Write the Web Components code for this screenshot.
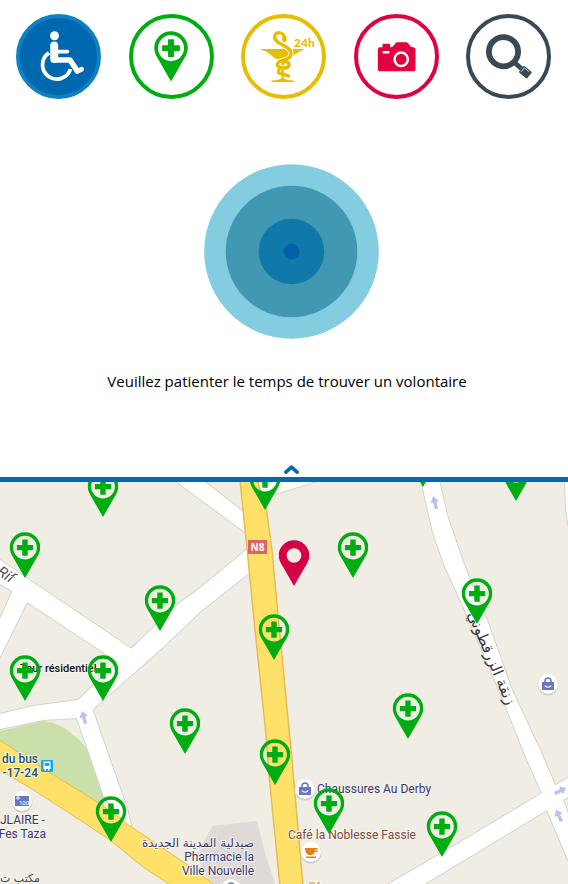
<!DOCTYPE html>
<html lang="fr">
<head>
<meta charset="utf-8">
<meta name="viewport" content="width=device-width, initial-scale=1">
<title>Recherche d'un volontaire</title>
<style>
  body { margin: 0; background: #fff; font-family: "Open Sans", sans-serif; color: #000; }
</style>
</head>
<body>
<assist-app></assist-app>

<script>
const define = (name, html, setup) => {
  const template = document.createElement('template');
  template.innerHTML = html;
  customElements.define(name, class extends HTMLElement {
    constructor() {
      super();
      this.attachShadow({ mode: 'open' }).append(template.content.cloneNode(true));
    }
    connectedCallback() { if (setup) setup(this, this.shadowRoot); }
  });
};

/* Pharmacy pin: ring, cross and pointed tail */
define('pin-glyph', `
  <style>
    :host { display: block; width: 31px; color: #00ad11; }
    svg { display: block; width: 100%; }
    .dot { display: none; }
    :host([kind="here"]) .dot { display: block; }
    :host([kind="here"]) .cross { display: none; }
  </style>
  <svg viewBox="0 0 31 46" aria-hidden="true" fill="currentColor">
    <g class="cross">
      <path fill-rule="evenodd" d="M15.500 .2A15.300 15.300 0 0 0 .2 15.500C.2 19.500 2 22.500 4 26L15.500 46 27 26C29 22.500 30.800 19.500 30.800 15.500A15.300 15.300 0 0 0 15.500 .2ZM15.500 3.700A11.900 11.900 0 1 1 15.500 27.500A11.900 11.900 0 1 1 15.500 3.700Z"/>
      <path d="M12.800 7.500h5.400v5.400h5.400v5.400h-5.400v5.400h-5.400v-5.400H7.400v-5.400h5.400z"/>
    </g>
    <path class="dot" fill-rule="evenodd" d="M15.500 .2A15.300 15.300 0 0 0 .2 15.500C.2 20 2.500 23.500 4 26L15.500 46 27 26C28.500 23.500 30.800 20 30.800 15.500A15.300 15.300 0 0 0 15.500 .2ZM15.500 8.200A7.300 7.300 0 1 1 15.500 22.800A7.300 7.300 0 1 1 15.500 8.200Z"/>
  </svg>`);

define('round-action', `
  <style>
    :host { display: block; }
    button { display: grid; place-items: center; width: 85px; height: 85px; padding: 0; border: 4px solid; border-radius: 50%; background: #fff; color: inherit; cursor: pointer; }
    :host([active]) button { background: #0068ae; border-color: #0f80c1; }
  </style>
  <button type="button"><slot></slot></button>`,
  (host, root) => root.querySelector('button').setAttribute('aria-label', host.getAttribute('label')));

define('action-bar', `
  <style>
    :host { display: flex; justify-content: space-between; padding: 14px 17px 0 16px; }
    svg { display: block; width: 85px; height: 85px; margin: -4px; }
    pin-glyph { width: 34px; }
    text { font: 900 12px Lato, sans-serif; }
  </style>
  <round-action active label="Assistance mobilité" style="color:#fff">
    <svg viewBox="0 0 85 85" fill="none" stroke="currentColor" stroke-linejoin="round" stroke-linecap="round">
      <circle cx="38.500" cy="21.700" r="4.500" fill="currentColor" stroke="none"/>
      <path d="M38.200 31.500V45" stroke-width="8"/>
      <path d="M41 37.600H51.500" stroke-width="3.600"/>
      <path d="M38.500 46H54L61 56.500" stroke-width="5.500"/>
      <path d="M61 57.500L65.500 55.300" stroke-width="4.800"/>
      <path d="M33 38.800A14.300 14.300 0 1 0 54.500 55" stroke-width="3.800" stroke-linecap="butt"/>
    </svg>
  </round-action>
  <round-action label="Pharmacies" style="color:#00ad11"><pin-glyph></pin-glyph></round-action>
  <round-action label="Pharmacies de garde" style="color:#e6bd00">
    <svg viewBox="0 0 85 85" fill="currentColor">
      <path d="M19.500 35H64C60 36.800 58 37.800 55 39.800C51 42.800 49.500 45.300 45.500 45.800H37.500C33 44.800 31 41.300 27 38.800C24 37 22 36.300 19.500 35.800Z"/>
      <path d="M39.500 45H43.500L42.600 64C44 66 49 66.200 53 66.700V68H30.500V66.700C34 66.200 39 66 40.500 64Z"/>
      <path d="M43.400 24C44 18 33.500 16.500 33.500 23C33.500 30.500 50 31 50 39.500C50 48 36.500 44.500 36.500 50.500C36.500 54 47.500 55 47.500 50.500" fill="none" stroke="#fff" stroke-width="5"/>
      <path d="M43.400 24C44 18 33.500 16.500 33.500 23C33.500 30.500 50 31 50 39.500C50 48 36.500 44.500 36.500 50.500C36.500 54.500 47.500 55.500 48 51C48 47.500 44.500 47 42.500 48M38 56C35 61 44 59.500 47.500 62" fill="none" stroke="currentColor" stroke-width="3.400" stroke-linecap="round"/>
      <ellipse cx="43.400" cy="25" rx="2.300" ry="3.300"/>
      <text x="53" y="33">24h</text>
    </svg>
  </round-action>
  <round-action label="Photo" style="color:#e3003f">
    <svg viewBox="0 0 85 85" fill="currentColor">
      <g transform="translate(0 .5)">
        <path d="M25.800 32.800H28.500V30.500Q28.500 29.300 29.700 29.300H35Q36.200 29.300 36.200 30.500V32.800Q38.500 32.800 39.500 31.300L41.500 28.700Q42.200 27.800 43.500 27.800H52Q53.200 27.800 54 28.700L56 31.300Q57 32.800 59 32.800Q61.500 32.800 61.500 35V54.500Q61.500 56.700 59.500 56.700H25.800Q23.800 56.700 23.800 54.500V35Q23.800 32.800 25.800 32.800Z"/>
        <rect x="28.500" y="36.500" width="7" height="2.600" rx="1.200" fill="#fff"/>
        <circle cx="47.200" cy="44.800" r="6.700" stroke="#fff" stroke-width="2.500"/>
      </g>
    </svg>
  </round-action>
  <round-action label="Rechercher" style="color:#384a55">
    <svg viewBox="0 0 85 85" fill="none" stroke="currentColor">
      <circle cx="37.500" cy="37.700" r="14.600" stroke-width="5.800"/>
      <path d="M48.500 48.500L55.500 54.700" stroke-width="4.800"/>
      <g transform="translate(55 54.500) rotate(40)" fill="currentColor" stroke="none">
        <rect x=".5" y="-4.200" width="10.500" height="8.400" rx="1"/>
        <path d="M2.200-2.700V2.500M2.200-2.700H8" fill="none" stroke="#fff" stroke-width=".7"/>
      </g>
    </svg>
  </round-action>`);

define('pulse-rings', `
  <style>
    :host { display: block; width: 175px; }
    svg { display: block; width: 100%; }
  </style>
  <svg viewBox="0 0 175 175" role="img" aria-label="Recherche en cours">
    <circle cx="87.500" cy="87.500" r="87.300" fill="#84cde0"/>
    <circle cx="87.500" cy="87.500" r="65.800" fill="#4098b3"/>
    <circle cx="87.500" cy="87.500" r="32.800" fill="#0f7aaa"/>
    <circle cx="87.500" cy="87.500" r="7.800" fill="#0560a9"/>
  </svg>`);

define('waiting-panel', `
  <style>
    :host { display: flex; flex-direction: column; align-items: center; padding-top: 65px; border-bottom: 5px solid #0068ae; }
    pulse-rings { margin-left: 15px; }
    p { margin: 30px 0 0; padding-left: 6px; font: 15px/24px "Open Sans", sans-serif; text-align: center; }
    button { display: block; margin: 68px 0 0 15px; padding: 4px 8px 3px; border: 0; background: none; color: #0068ae; cursor: pointer; }
    svg { display: block; width: 15px; height: 9px; }
  </style>
  <pulse-rings></pulse-rings>
  <p role="status"><slot></slot></p>
  <button type="button" aria-label="Agrandir la carte">
    <svg viewBox="0 0 15 9"><path d="M1.900 7.100L7.500 2.200L13.100 7.100" fill="none" stroke="currentColor" stroke-width="3.600" stroke-linecap="round" stroke-linejoin="round"/></svg>
  </button>`);

define('map-pin', `
  <style>
    :host { position: absolute; width: 31px; transform: translate(-50%, -100%); }
    button { display: block; padding: 0; border: 0; background: none; color: inherit; cursor: pointer; }
    :host([kind="here"]) pin-glyph { color: #d40047; }
  </style>
  <button type="button"><pin-glyph></pin-glyph></button>`,
  (host, root) => {
    const kind = host.getAttribute('kind');
    root.querySelector('button').setAttribute('aria-label', kind ? 'Ma position' : 'Pharmacie');
    if (kind) root.querySelector('pin-glyph').setAttribute('kind', kind);
  });

/* City map: roads, places and labels share one coordinate system */
define('city-map', `
  <style>
    :host { display: block; position: relative; width: 100%; aspect-ratio: 568 / 402; overflow: hidden; background: #f0ede5; }
    svg { display: block; width: 100%; height: 100%; }
    .label { font: 12px Roboto, "DejaVu Sans", sans-serif; fill: #36386a; stroke: #f7f4ef; stroke-width: 2px; paint-order: stroke; }
    .end { text-anchor: end; }
    .stop { font-weight: 500; fill: #28506a; }
    .cafe { fill: #824a3c; }
    .black { font-size: 11px; font-weight: 500; fill: #111; }
    .arabic { font-size: 12px; font-family: "DejaVu Sans", sans-serif; }
    .street { font-size: 15px; fill: #333; stroke: none; }
  </style>
  <svg viewBox="0 482 568 402">
    <defs>
      <g id="roads">
        <path d="M0 560L25 577 132 649 118 662 27 602 14 592 0 584Z"/>
        <path d="M14 588L0 619V657L28 600Z"/>
        <path d="M130 650L177 605 200 588 250 547 254 569 200 612 160 650 92 710 77 718 43 720 0 729V714L33 706 78 700 118 662Z"/>
        <path d="M76 716L88 750 104 797 132 830 127 808 110 760 92 708Z"/>
        <path d="M177 482L200 499 250 536 246 514 205 482Z"/>
        <path d="M254 480H320L275 494 260 500Z"/>
        <path d="M421 480L433 533 445 567 465 610 502 697 527 760 542 793 547 810 568 860V813L563 800 555 785 540 750 512 690 487 620 470 580 460 553 447 515 439 480Z"/>
        <path d="M568 778L542 793 447 850 387 885H423L547 810 568 797Z"/>
        <path d="M565 480L566 510 570 535V480Z"/>
      </g>
      <g id="bag" fill="#6876c8">
        <path d="M-6-2H6V6H-6Z"/>
        <path d="M-3-1V-3A3 3 0 0 1 3-3V-1" fill="none" stroke="#6876c8" stroke-width="1.600"/>
        <path d="M-3 1.500A3.200 2.600 0 0 0 3 1.500" fill="none" stroke="#fff" stroke-width="1.200"/>
      </g>
      <g id="disc"><circle cy="1" r="10.500" fill="#cfcbc4"/><circle r="10" fill="#fff"/></g>
      <path id="way" d="M0-7L4.500-1H1.700V6H-1.700V-1H-4.500Z" fill="#b9c1ee"/>
    </defs>

    <path d="M212 826L257 821 264 850 275 884H210L197 856Z" fill="#dfdad5"/>
    <path d="M0 731L43 721Q60 722 73 735Q86 744 91 757L104 797V808L28 762 0 742Z" fill="#cbdfab"/>
    <use href="#roads" stroke="#d8d3c8" stroke-width="2" stroke-linejoin="round"/>
    <use href="#roads" fill="#fff"/>
    <path d="M-2 739L28 759 102 805 130 826 185 863 216 886H172L143 867 110 840 83 822 32 789-2 769Z" fill="#ffe169" stroke="#e6bb52"/>
    <path d="M240 480L247 548 254 620 266 735 269 775 280 886H303L292 760 278 615 272 550 266 507 257 480Z" fill="#ffe169" stroke="#e6bb52" stroke-width="1.500"/>

    <use href="#way" transform="translate(435 503) rotate(-14)"/>
    <use href="#way" transform="translate(84 718) rotate(-16)"/>
    <use href="#way" transform="translate(560 791) rotate(64)"/>
    <use href="#way" transform="translate(559 816) rotate(-24)"/>
    <use href="#way" transform="translate(399 888) rotate(60)"/>

    <rect x="248" y="540" width="19" height="14" fill="#dc6464"/>
    <text x="257.500" y="551" text-anchor="middle" font-family="Noto Sans, sans-serif" font-size="10" font-weight="700" fill="#fff">N8</text>

    <text class="label" transform="translate(-4 574) rotate(33)" style="font-size:15px;font-style:italic;fill:#555;stroke:none">Rif</text>
    <text class="label arabic street" text-anchor="middle" transform="translate(487 660) rotate(67)">زنقة الزرقطوني</text>

    <text class="label black" x="20" y="672">Tour résidentiel</text>
    <text class="label stop end" x="38" y="763">du bus</text>
    <text class="label stop end" x="38" y="777">-17-24</text>
    <text class="label" x="0" y="824">JLAIRE -</text>
    <text class="label end" x="46" y="838">Fes Taza</text>
    <text class="label arabic" x="0" y="882" style="font-size:11px;fill:#444">مكتب ت</text>
    <text class="label arabic" x="142" y="847">صيدلية المدينة الجديدة</text>
    <text class="label end" x="254" y="861">Pharmacie la</text>
    <text class="label end" x="254" y="875">Ville Nouvelle</text>
    <text class="label" x="317" y="793">Chaussures Au Derby</text>
    <text class="label cafe" x="288" y="839">Café la Noblesse Fassie</text>

    <g transform="translate(47 766)">
      <rect x="-6" y="-6" width="12" height="12" rx="1" fill="#12a9f3"/>
      <path d="M-3.500-4.500H3.500V3H2.500V4.500H1V3H-1V4.500H-2.500V3H-3.500Z" fill="#fff"/>
      <path d="M-2.300-3H2.300V0H-2.300Z" fill="#12a9f3"/>
    </g>
    <g transform="translate(305 789)"><use href="#disc"/><use href="#bag"/></g>
    <g transform="translate(548 684)"><use href="#disc"/><use href="#bag"/></g>
    <g transform="translate(231 889)"><use href="#disc"/><use href="#bag"/></g>
    <g transform="translate(22 801)">
      <use href="#disc"/>
      <rect x="-7" y="-5" width="14" height="10" fill="#6876c8"/>
      <path d="M-6-3H-2M-4-5V-1" stroke="#fff"/>
      <text x="2" y="4" text-anchor="middle" font-family="Roboto, sans-serif" font-size="6" fill="#fff">100</text>
    </g>
    <g transform="translate(311 852)">
      <use href="#disc"/>
      <path d="M-6-4H6.500V0H3.500Q2.500 3 0 3H-2Q-6 2-6-4ZM-5 4.500H5V6H-5Z" fill="#e97c14"/>
      <path d="M4-3H5.500V-1H4Z" fill="#fff"/>
    </g>
    <g transform="translate(315 890)">
      <use href="#disc"/>
      <path d="M-5-8V-4M-3-8V-4M-1-8V-4M2-4Q2-8 4-8V-4" stroke="#e97c14" fill="none"/>
    </g>
  </svg>`,
  (host, root) => {
    const pins = [[423, 487], [516, 501], [265, 510], [103, 517], [25, 578], [353, 578],
      [160, 631], [477, 624], [274, 660], [25, 701], [103, 701], [408, 739],
      [185, 754], [275, 785], [329, 834], [111, 842], [442, 857], [294, 586, 'here']];
    for (const [x, y, kind] of pins) {
      const pin = document.createElement('map-pin');
      pin.style.left = x / 568 * 100 + '%';
      pin.style.top = (y - 482) / 402 * 100 + '%';
      if (kind) pin.setAttribute('kind', kind);
      root.append(pin);
    }
  });

define('assist-app', `
  <style>
    :host { display: flex; flex-direction: column; }
  </style>
  <header><action-bar></action-bar></header>
  <main>
    <waiting-panel>Veuillez patienter le temps de trouver un volontaire</waiting-panel>
    <city-map></city-map>
  </main>`);
</script>
</body>
</html>
